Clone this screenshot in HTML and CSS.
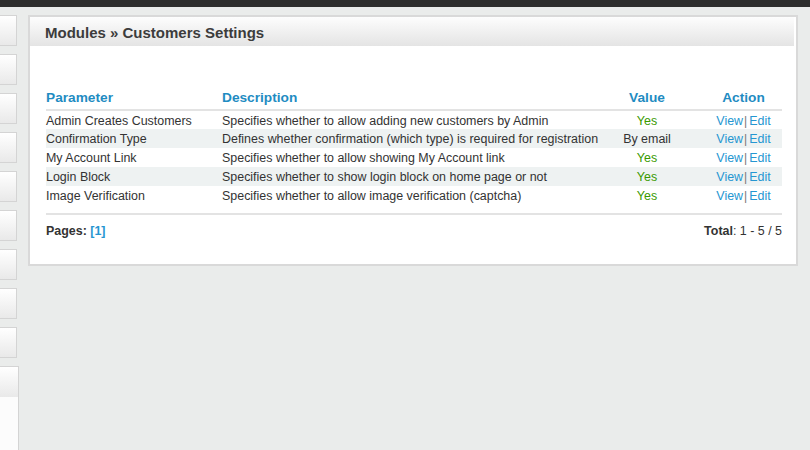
FILE: index.html
```html
<!DOCTYPE html>
<html>
<head>
<meta charset="utf-8">
<link rel="stylesheet" href="styles.css">
</head>
<body>
<div class="topbar"></div>
<div class="layout">
  <div class="sidebar">
    <div class="side-box"></div>
    <div class="side-box"></div>
    <div class="side-box"></div>
    <div class="side-box"></div>
    <div class="side-box"></div>
    <div class="side-box"></div>
    <div class="side-box"></div>
    <div class="side-box"></div>
    <div class="side-box"></div>
    <div class="side-big"><div class="side-big-head"></div></div>
  </div>
  <div class="panel">
    <div class="panel-head">Modules » Customers Settings</div>
    <div class="panel-body">
      <table class="grid">
        <thead>
          <tr>
            <th class="c-param">Parameter</th>
            <th class="c-desc">Description</th>
            <th class="c-val">Value</th>
            <th class="c-act">Action</th>
          </tr>
        </thead>
        <tbody>
          <tr>
            <td class="c-param">Admin Creates Customers</td>
            <td class="c-desc">Specifies whether to allow adding new customers by Admin</td>
            <td class="c-val yes">Yes</td>
            <td class="c-act"><a>View</a><span class="sep">|</span><a>Edit</a></td>
          </tr>
          <tr class="alt">
            <td class="c-param">Confirmation Type</td>
            <td class="c-desc">Defines whether confirmation (which type) is required for registration</td>
            <td class="c-val">By email</td>
            <td class="c-act"><a>View</a><span class="sep">|</span><a>Edit</a></td>
          </tr>
          <tr>
            <td class="c-param">My Account Link</td>
            <td class="c-desc">Specifies whether to allow showing My Account link</td>
            <td class="c-val yes">Yes</td>
            <td class="c-act"><a>View</a><span class="sep">|</span><a>Edit</a></td>
          </tr>
          <tr class="alt">
            <td class="c-param">Login Block</td>
            <td class="c-desc">Specifies whether to show login block on home page or not</td>
            <td class="c-val yes">Yes</td>
            <td class="c-act"><a>View</a><span class="sep">|</span><a>Edit</a></td>
          </tr>
          <tr>
            <td class="c-param">Image Verification</td>
            <td class="c-desc">Specifies whether to allow image verification (captcha)</td>
            <td class="c-val yes">Yes</td>
            <td class="c-act"><a>View</a><span class="sep">|</span><a>Edit</a></td>
          </tr>
        </tbody>
      </table>
      <div class="pager">
        <div><b>Pages:</b> <b class="link">[1]</b></div>
        <div><b>Total</b>: 1 - 5 / 5</div>
      </div>
    </div>
  </div>
</div>
</body>
</html>
```
FILE: styles.css
```css
html, body {
  margin: 0;
  padding: 0;
  background: #eaeceb;
  font-family: "Liberation Sans", Arial, sans-serif;
  font-size: 12.45px;
  color: #333;
  height: 450px;
  overflow: hidden;
}
.topbar {
  height: 7px;
  background: #2d2d2d;
}
.layout {
  display: flex;
  align-items: flex-start;
  padding-top: 8px;
}
.sidebar {
  width: 20px;
  display: flex;
  flex-direction: column;
  gap: 8px;
}
.side-box {
  width: 16px;
  height: 29px;
  border: 1px solid #d4d4d4;
  border-left: none;
  background: linear-gradient(#ffffff, #e9e9e9);
}
.side-big {
  width: 18px;
  height: 90px;
  border: 1px solid #d4d4d4;
  border-left: none;
  background: #fcfcfc;
}
.side-big-head {
  height: 30px;
  background: linear-gradient(#ffffff, #e9e9e9);
}
.panel {
  margin-left: 8px;
  width: 766px;
  height: 247px;
  border: 2px solid #d9d9d9;
  background: #fff;
}
.panel-head {
  height: 29px;
  line-height: 31px;
  padding-left: 15px;
  font-size: 15px;
  font-weight: bold;
  color: #3c3c3c;
  background: linear-gradient(#fdfdfd, #e4e4e4);
  margin-right: 2px;
}
.panel-body {
  padding: 40px 14px 0 16px;
}
.grid {
  width: 736px;
  border-collapse: collapse;
}
.grid th {
  font-size: 13.7px;
  font-weight: bold;
  color: #1f8cc2;
  text-align: left;
  height: 23px;
  padding: 0;
  border-bottom: 2px solid #e3e3e3;
}
.grid td {
  height: 19px;
  padding: 1px 0 0;
  box-sizing: border-box;
  white-space: nowrap;
}
.grid tr.alt td {
  background: #eef2f2;
}
.c-param { width: 176px; }
.c-desc { width: 387px; }
.grid .c-val { width: 76px; text-align: center; }
.grid .c-act { text-align: center; padding-left: 20px; }
.yes { color: #3a9a00; }
.grid a {
  color: #2596d1;
}
.sep {
  color: #777;
  padding: 0 2px 0 1px;
  font-size: 12px;
}
.pager {
  margin-top: 8px;
  border-top: 2px solid #e3e3e3;
  display: flex;
  justify-content: space-between;
  padding-top: 9px;
  width: 736px;
}
.pager b { color: #333; }
.pager .link { color: #2596d1; }
```
